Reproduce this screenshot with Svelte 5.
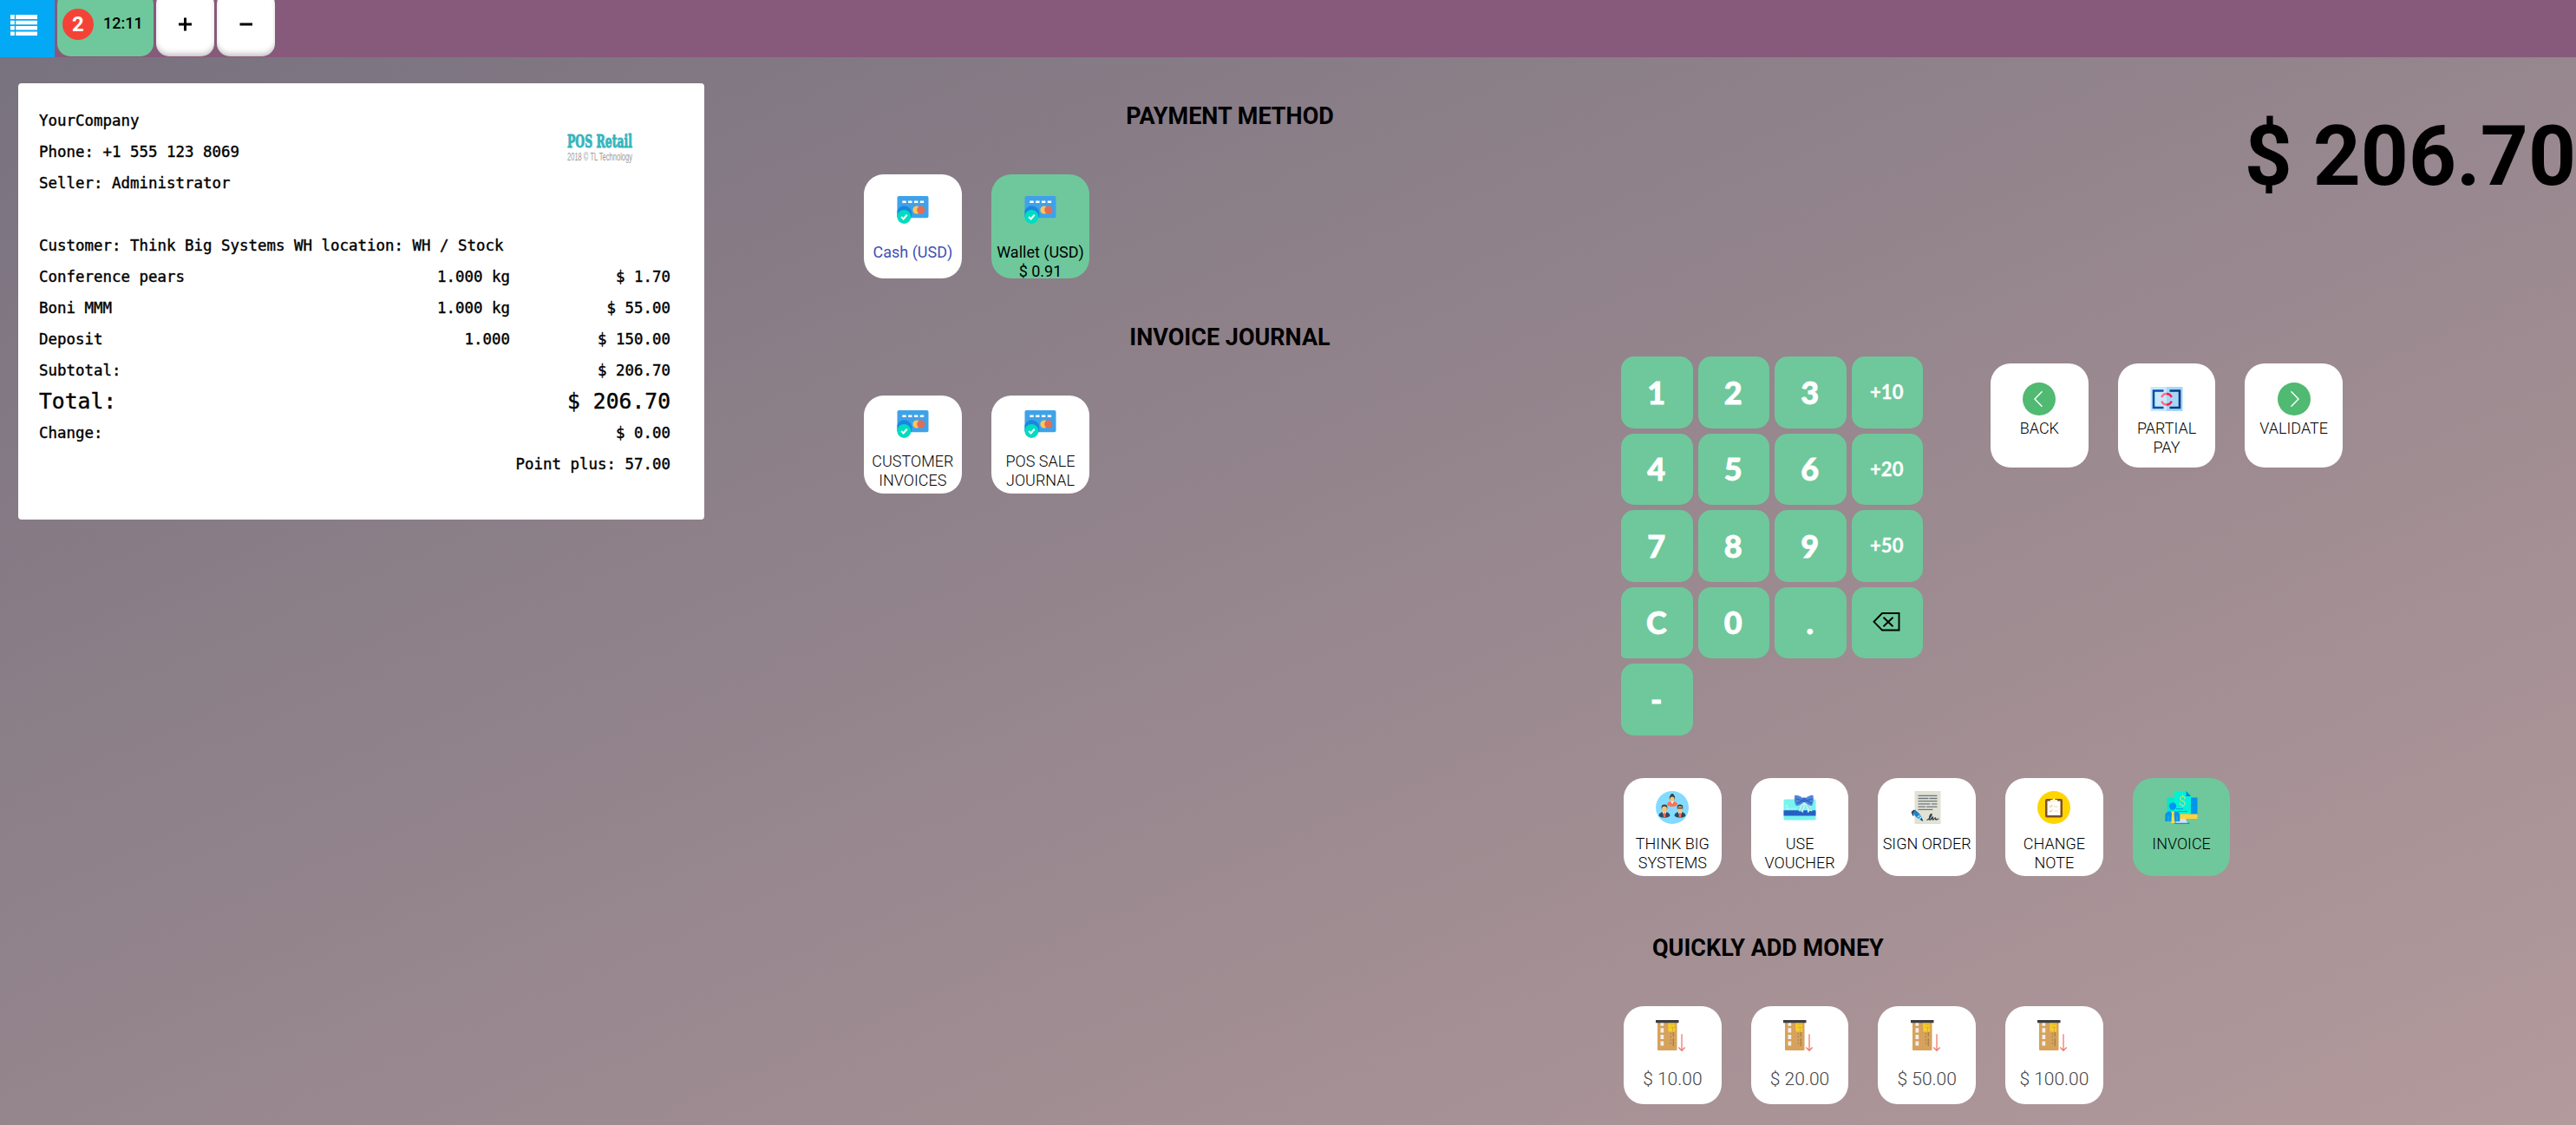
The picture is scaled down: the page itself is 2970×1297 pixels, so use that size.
<script>
  const header = ['YourCompany', 'Phone: +1 555 123 8069', 'Seller: Administrator'];
  const lines = [
    ['Conference pears', '1.000 kg', '$ 1.70'],
    ['Boni MMM', '1.000 kg', '$ 55.00'],
    ['Deposit', '1.000', '$ 150.00'],
    ['Subtotal:', '', '$ 206.70']
  ];
  const keys = ['1', '2', '3', '+10', '4', '5', '6', '+20', '7', '8', '9', '+50', 'C', '0', '.', 'del', '-'];
  const controls = [
    { icon: 'back', label: ['BACK'] },
    { icon: 'partial', label: ['PARTIAL', 'PAY'] },
    { icon: 'next', label: ['VALIDATE'] }
  ];
  const actions = [
    { icon: 'team', label: ['THINK BIG', 'SYSTEMS'] },
    { icon: 'gift', label: ['USE', 'VOUCHER'] },
    { icon: 'sign', label: ['SIGN ORDER'] },
    { icon: 'note', label: ['CHANGE', 'NOTE'] },
    { icon: 'invoice', label: ['INVOICE'], active: true }
  ];
  const amounts = ['$ 10.00', '$ 20.00', '$ 50.00', '$ 100.00'];
</script>

{#snippet icon(name)}
  <svg class="icon" viewBox="0 0 38 38" aria-hidden="true">
    {#if name === 'card'}
      <rect x="0.5" y="4" width="37" height="26" rx="2" fill="#3fa2e9" />
      <path d="M.5 21.5A9 9 0 0 1 17.8 26a9 9 0 0 1-.8 4H2.500a2 2 0 0 1-2-2z" fill="#1787e0" />
      <path d="M6.500 11h4.500M13.500 11H18M20.500 11H25M27.500 11H32" stroke="#fff" stroke-width="2.600" />
      <circle cx="23.500" cy="20.500" r="4.600" fill="#fbc75a" />
      <circle cx="28.500" cy="20.500" r="4.700" fill="#e46c55" />
      <circle cx="8.600" cy="28.700" r="8.200" fill="#00dcc0" />
      <path d="M5.300 28.800l2.500 2.500 4.300-5" fill="none" stroke="#fff" stroke-width="2.300" />
    {:else if name === 'back' || name === 'next'}
      <circle cx="19" cy="19" r="19" fill="#50b972" />
      {#if name === 'back'}
        <path d="M22.500 10.300L14 19l8.500 8.700" fill="none" stroke="#fff" stroke-width="1.400" />
      {:else}
        <path d="M15.500 10.300L24 19l-8.500 8.700" fill="none" stroke="#fff" stroke-width="1.400" />
      {/if}
    {:else if name === 'partial'}
      <path d="M.5 5H19v28H.5z" fill="#c9e8fb" />
      <path d="M19 5h18.500v28H19z" fill="#a6d6f7" />
      <path d="M15.500 9.500H4v19.500h11.500" fill="none" stroke="#0b4fa8" stroke-width="2.600" />
      <path d="M22.500 9.500H34v19.500H22.500" fill="none" stroke="#083c84" stroke-width="2.600" />
      <path d="M13.300 17A6 6 0 0 1 19 13M13.300 21.500A6 6 0 0 0 19 25.500" fill="none" stroke="#fd6e88" stroke-width="2.400" />
      <path d="M24.700 17A6 6 0 0 0 19 13M24.700 21.500A6 6 0 0 1 19 25.500" fill="none" stroke="#fb1c45" stroke-width="2.400" />
    {:else if name === 'team'}
      <circle cx="19" cy="19" r="19" fill="#84dbff" />
      <circle cx="19" cy="4.800" r="1.900" fill="#2c3e50" />
      <circle cx="19" cy="7.800" r="3.200" fill="#2c3e50" />
      <circle cx="19" cy="9.200" r="2.600" fill="#ffc36b" />
      <path d="M13 16c0-3.200 3-4.200 6-4.200s6 1 6 4.200c-1.800 2.500-10.200 2.500-12 0z" fill="#ff7058" />
      <path d="M17.200 11.800h3.600L19 15z" fill="#fff" />
      <circle cx="10" cy="19" r="3.400" fill="#2c3e50" />
      <circle cx="28" cy="19" r="3.400" fill="#2c3e50" />
      <circle cx="10" cy="20.500" r="2.900" fill="#ffc36b" />
      <circle cx="28" cy="20.500" r="2.900" fill="#ffc36b" />
      <path d="M25.200 19.600h5.600" stroke="#2c3e50" stroke-width="1.200" />
      <path d="M3.500 28.500c.5-3.500 3.500-4.500 6.500-4.500s6 1 6.500 4.500C14 31.500 6 31.500 3.500 28.500zM21.500 28.500c.5-3.500 3.500-4.500 6.500-4.500s6 1 6.500 4.500C32 31.500 24 31.500 21.500 28.500z" fill="#324a5e" />
      <path d="M7.800 24h4.400L10 30zM25.800 24h4.400L28 30z" fill="#fff" />
      <path d="M9.200 24.500h1.600l.6 4.500L10 31l-1.400-2zM27.200 24.500h1.600l.6 4.500L28 31l-1.400-2z" fill="#ff7058" />
    {:else if name === 'gift'}
      <rect x=".5" y="9.500" width="37" height="24" rx="1.500" fill="#78f3ee" />
      <path d="M.5 22.300h37v6.200H.5z" fill="#2560c4" />
      <path d="M2.500 17h3M2.500 20h5M9 20h2M12.500 20h2" stroke="#fff" stroke-width=".9" opacity=".8" />
      <path d="M22 12l-4.300 11.500 2.800-1 1.800 3L26 14l2.500 11.500 2-2.800 3 .8L28 11z" fill="#c2f5f3" />
      <path d="M23 16l-3 8M28 16l3.500 6" stroke="#7fc9d8" stroke-width="1" />
      <path d="M23 8.500c-4-3.500-8.500-4.300-9.800-3.200-.8 4 0 9 1.500 11.500 3 .5 6-1 9-4z" fill="#4f86dd" />
      <path d="M25.500 8.500c4-3.500 7.800-4.300 9-3.200.8 4 0 9-1.500 11.500-3 .5-5-1-8-4z" fill="#4f86dd" />
      <path d="M15 9c3 1 5 1.500 8 1.800M15.500 14c2.500-.5 5-1.500 7-3M33.500 9c-3 1-4 1.500-7 1.800M33 14c-2.500-.5-4-1.500-6-3" fill="none" stroke="#2d5fb8" stroke-width="1.100" />
      <rect x="21.800" y="7.500" width="4.800" height="5.600" rx="1.500" fill="#3869c4" />
    {:else if name === 'sign'}
      <path d="M4.500 0h30v38h-30z" fill="#e1e2d4" />
      <path d="M8.500 5.300h22M8.500 8.500h12M21.500 8.500h9M8.500 11.700h22M8.500 14.900h14M24 14.900h6.500M8.500 18.100h8.500M18 18.100h12.500M8.500 21.300h17" stroke="#6b7680" stroke-width="1.300" />
      <path d="M18.500 33.500c3-1 6.500-6.500 5.500-7s-3 3.500-2.500 6 3.500-3 4-2.500-1.500 3 0 3 2-2.500 3-2-.5 2 .5 2 3-.8 3-1.500" fill="none" stroke="#36404d" stroke-width="1.300" />
      <path d="M1.500 24l3.500-2.500 5.500 5-4 4z" fill="#1e82c8" />
      <path d="M6.500 30.500l4-4 2.500 4.500-2 2z" fill="#35a7e8" />
      <path d="M8.500 30l1.500-1.500M10 32l2-2" stroke="#fff" stroke-width="1" />
      <path d="M10.800 33l2-2 1.500 4z" fill="#2a3441" />
      <path d="M4 22l-2.500 2.500 1.500 4" fill="none" stroke="#2a3441" stroke-width="1.500" />
    {:else if name === 'note'}
      <circle cx="19" cy="19" r="19" fill="#ffd500" />
      <rect x="9" y="9" width="20" height="21.500" rx="2" fill="#7c4f26" />
      <path d="M11.500 11.500h15V28h-15z" fill="#fff" />
      <path d="M15 12.800V10h2.300a1.800 1.800 0 0 1 3.400 0H23v2.800z" fill="#fff3dc" />
      <path d="M14 17.300l1.200 1.200 2-2.300M14 22.800l1.200 1.200 2-2.300" fill="none" stroke="#f3a73b" stroke-width="1" />
      <path d="M19 18h5M19 23h5" stroke="#f9d9b0" stroke-width="1.100" />
    {:else if name === 'invoice'}
      <path d="M29 7.500h8.500V27H29z" fill="#0095e8" />
      <path d="M2.500 7.500H11V25H2.500z" fill="#00e7d0" />
      <path d="M11 1.500A1.500 1.500 0 0 1 12.500 0H24.500l5.500 6v20.500H11z" fill="#00f2d7" />
      <path d="M24.500 0l5.500 6h-5.500z" fill="#0086d8" />
      <text x="15.500" y="17" font-family="Roboto" font-size="15" fill="#ecd93c">$</text>
      <path d="M13 20.500h8M15 23.500h11" stroke="#0095e8" stroke-width=".9" />
      <circle cx="9" cy="17.500" r="4.200" fill="#0095f0" />
      <path d="M16 26.500h21.500V32H16z" fill="#ffd33b" />
      <path d="M15.500 32h8.500l2 5H12.500z" fill="#d5dff5" />
      <path d="M11 37.300h17.500" stroke="#0095e8" stroke-width="1.200" />
      <path d="M.3 35v-7c0-3 3-4.500 5-4.500h7c3 0 5 2 5 4.500v7z" fill="#0a94e8" />
      <path d="M7 23.500h4.200l-.7 2.500.8 11h-4l.7-11z" fill="#ffdd48" />
      <path d="M4 28.500V35M14 28.500V35" stroke="#1ec5dd" stroke-width=".8" />
    {:else if name === 'cash'}
      <path d="M2 2h22.500v32a1 1 0 0 1-1 1H3a1 1 0 0 1-1-1z" fill="#d6a25c" />
      <path d="M5.500 2h3.700v4.800H5.500zM5.500 9.300h3.700v5.200H5.500zM5.500 17h3.700v5H5.500zM5.500 24.500h3.700v5H5.500z" fill="#f2efec" />
      <path d="M14.300 2h8v11.500h-7a1 1 0 0 1-1-1z" fill="#f6cd2d" />
      <path d="M16.500 5h5.500M16.500 8.300h3v5M19.500 8.300H22" fill="none" stroke="#d3a91a" stroke-width=".8" />
      <path d="M17.300 15v14" stroke="#a9814a" stroke-width="1.200" stroke-dasharray="1.600 2" />
      <path d="M20.300 14v5M20.300 21v9" stroke="#a9814a" stroke-width="1.400" />
      <path d="M0 0h26.500v3.200H0z" fill="#3b3d46" />
      <path d="M30 16.300V35M26.300 31.500L30 35.300l3.700-3.800" fill="none" stroke="#f17a68" stroke-width="1.300" />
    {/if}
  </svg>
{/snippet}

{#snippet tile(item)}
  <button class="tile" class:active={item.active}>
    {@render icon(item.icon)}
    <span class="label">
      {#each item.label as part}<span>{part}</span>{/each}
    </span>
  </button>
{/snippet}

<div class="pos">
  <header class="topbar">
    <button class="menu" aria-label="Menu">
      <svg viewBox="0 0 31 25" aria-hidden="true">
        <path d="M0 0h4.800v4.900H0zM6.200 0h24.800v4.900H6.200zM0 6.700h4.800v4.600H0zM6.200 6.700h24.800v4.600H6.200zM0 13h4.800v4.600H0zM6.200 13h24.800v4.600H6.200zM0 19.500h4.800v4.500H0zM6.200 19.500h24.800v4.500H6.200z" fill="#fff" />
      </svg>
    </button>
    <button class="order"><span class="badge">2</span><span class="time">12:11</span></button>
    <button class="square" aria-label="New order"><svg viewBox="0 0 16 16" aria-hidden="true"><path d="M0 8h15M7.500 .5v15" stroke="#000" stroke-width="3" /></svg></button>
    <button class="square" aria-label="Remove order"><svg viewBox="0 0 16 16" aria-hidden="true"><path d="M.5 8h14.500" stroke="#000" stroke-width="3" /></svg></button>
  </header>

  <main>
    <section class="receipt">
      <div class="head">
        <div>{#each header as line}<p>{line}</p>{/each}</div>
        <svg class="logo" viewBox="0 0 76 36" aria-hidden="true">
          <text class="brand" x="0" y="18" textLength="75" lengthAdjust="spacingAndGlyphs">POS Retail</text>
          <text class="copy" x="0" y="33" textLength="75" lengthAdjust="spacingAndGlyphs">2018 © TL Technology</text>
        </svg>
      </div>
      <p class="customer">Customer: Think Big Systems WH location: WH / Stock</p>
      {#each lines as [name, qty, price]}
        <div class="row"><span>{name}</span><span>{qty}</span><span>{price}</span></div>
      {/each}
      <div class="row total"><span>Total:</span><span></span><span>$ 206.70</span></div>
      <div class="row"><span>Change:</span><span></span><span>$ 0.00</span></div>
      <p class="points">Point plus: 57.00</p>
    </section>

    <section class="methods">
      <h2>PAYMENT METHOD</h2>
      <div class="tiles pay">
        <button class="tile">{@render icon('card')}<span class="label cash">Cash (USD)</span></button>
        <button class="tile active">{@render icon('card')}<span class="label"><span>Wallet (USD)</span><span>$ 0.91</span></span></button>
      </div>
      <h2 class="second">INVOICE JOURNAL</h2>
      <div class="tiles journals">
        {@render tile({ icon: 'card', label: ['CUSTOMER', 'INVOICES'] })}
        {@render tile({ icon: 'card', label: ['POS SALE', 'JOURNAL'] })}
      </div>
    </section>

    <section class="side">
      <div class="due">$ 206.70</div>
      <div class="entry">
        <div class="keypad">
          {#each keys as key}
            <button class="key" class:quick={key.length === 3} class:clear={key === 'C'}>
              {#if key === 'del'}
                <svg viewBox="0 0 32 22" aria-hidden="true"><path d="M11 1h19.500v19.500H11L1.500 10.800zM12.500 5.800l11 10.500M23.500 5.800l-11 10.500" fill="none" stroke="#000" stroke-width="1.900" /></svg>
              {:else}{key}{/if}
            </button>
          {/each}
        </div>
        <div class="tiles controls">
          {#each controls as item}{@render tile(item)}{/each}
        </div>
      </div>
      <div class="tiles actions">
        {#each actions as item}{@render tile(item)}{/each}
      </div>
      <h2 class="quickly">QUICKLY ADD MONEY</h2>
      <div class="tiles money">
        {#each amounts as amount}
          {@render tile({ icon: 'cash', label: [amount] })}
        {/each}
      </div>
    </section>
  </main>
</div>

<style>
  :global(body) { margin: 0; overflow: hidden; }
  .pos {
    width: 2970px;
    height: 1297px;
    overflow: hidden;
    display: flex;
    flex-direction: column;
    background: linear-gradient(to right bottom, #77717e, #b39a9c);
    font-family: Roboto, "Liberation Sans", sans-serif;
    color: #000;
  }
  button { border: 0; padding: 0; margin: 0; font: inherit; color: inherit; }
  p, h2 { margin: 0; }

  .topbar { flex: none; height: 66px; background: #875a7b; display: flex; overflow: hidden; }
  .menu { width: 63px; height: 66px; background: #03a9f4; display: flex; align-items: center; padding-left: 12px; box-sizing: border-box; margin-right: 3px; padding-bottom: 8px; }
  .menu svg { width: 31px; height: 25px; }
  .order, .square { height: 75px; margin: -10px 3px 0 0; border-radius: 15px; display: flex; align-items: center; box-sizing: border-box; }
  .order { width: 111px; background: #6ec89b; padding: 1px 0 0 6px; gap: 11px; }
  .badge { width: 36px; height: 36px; border-radius: 50%; background: #f44336; color: #fff; font-weight: 700; font-size: 24px; line-height: 37px; text-align: center; }
  .time { font-size: 18px; font-weight: 500; padding-bottom: 3px; }
  .square { width: 67px; background: #fff; justify-content: center; box-shadow: inset 0 -5px 6px -2px rgba(0, 0, 0, .25); }
  .square svg { width: 16px; height: 16px; }

  main { flex: 1; display: grid; grid-template-columns: 967px 902px 1101px; align-items: start; }

  .receipt {
    box-sizing: border-box; width: 791px; height: 503px; margin: 30px 0 0 21px; padding: 25px 39px 46px 24px;
    background: #fff; border-radius: 4px;
    font-family: "DejaVu Sans Mono", monospace; font-size: 17.440px; line-height: 36px;
    -webkit-text-stroke: .4px #000;
  }
  .head { display: flex; justify-content: space-between; height: 144px; }
  .logo { width: 76px; height: 36px; margin: 31px 43px 0 0; overflow: visible; -webkit-text-stroke: 0; }
  .brand { font-family: "DejaVu Serif", serif; font-weight: 700; font-size: 21px; fill: #35b5be; stroke: #35b5be; stroke-width: 1px; }
  .copy { font-family: "Liberation Sans", sans-serif; font-size: 12.500px; fill: #999; }
  .customer { white-space: nowrap; }
  .row { display: grid; grid-template-columns: 343px 200px 185px; height: 36px; }
  .row span:not(:first-child) { text-align: right; }
  .total { font-size: 24.700px; }
  .points { text-align: right; }

  h2 { font-size: 27px; line-height: 32px; font-weight: 700; }
  .methods { padding-top: 52px; }
  .methods h2 { text-align: center; }
  .methods .second { margin-top: 52px; }
  .tiles { display: flex; gap: 34px; }
  .methods .tiles { margin: 51px 0 0 29px; gap: 34.500px; }

  .tile {
    flex: none; width: 112.700px; height: 113px; border-radius: 23px; background: #fff; overflow: hidden;
    display: flex; flex-direction: column; align-items: center; box-sizing: border-box; padding-top: 15px;
    font-size: 18px; line-height: 22px; font-weight: 300;
  }
  .tile.active { background: #6ec89b; }
  .icon { width: 38px; height: 38px; flex: none; }
  .label { display: flex; flex-direction: column; text-align: center; margin-top: 12px; white-space: nowrap; }
  .pay .tile { height: 120px; padding-top: 21px; font-weight: 400; }
  .pay .label { margin-top: 21px; }
  .pay .icon, .journals .icon { width: 37px; height: 37px; }
  .cash { color: #3f51b5; }
  .journals .tile { padding-top: 13px; }
  .journals .label { margin-top: 15px; }

  .due { text-align: right; font-size: 96px; font-weight: 700; line-height: 112px; margin-top: 58px; }
  .entry { display: flex; margin-top: 175px; }
  .keypad { width: 348px; display: grid; grid-template-columns: repeat(4, 82.500px); grid-auto-rows: 82.500px; gap: 6px; }
  .key {
    background: #6ec89b; border-radius: 15px; color: #fff; display: flex; align-items: center; justify-content: center;
    font-family: Lato, sans-serif; font-size: 36px; font-weight: 900; padding: 0 1px 1px 0;
    -webkit-text-stroke: .8px #fff;
  }
  .key.quick { font-size: 22px; font-weight: 700; -webkit-text-stroke: .3px #fff; }
  .key.clear { border-bottom-left-radius: 5px; }
  .key svg { width: 32px; height: 22px; margin-right: 1px; }
  .controls { margin: 8px 0 0 78px; }
  .controls .tile { height: 120px; padding-top: 22px; }
  .controls .label { margin-top: 4px; }
  .actions { margin: 49px 0 0 3px; }
  .quickly { margin: 67px 0 0 36px; }
  .money { margin: 51px 0 0 3px; }
  .money .tile { font-size: 21px; color: #444; padding-top: 16px; }
  .money .label { margin-top: 19px; }
</style>
